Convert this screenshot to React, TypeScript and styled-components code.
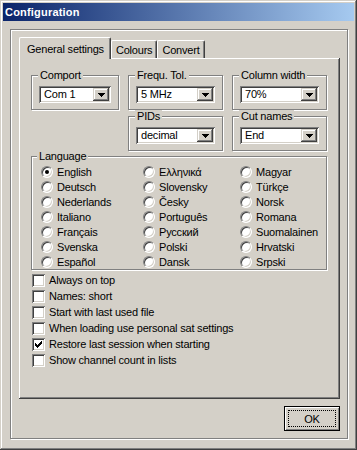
import styled, { createGlobalStyle } from 'styled-components';

const GlobalStyle = createGlobalStyle`
  html, body {
    margin: 0;
    padding: 0;
    background: #d4d0c8;
  }
`;

const Window = styled.div`
  box-sizing: border-box;
  width: 357px;
  height: 450px;
  padding: 3px;
  display: flex;
  flex-direction: column;
  background: #d4d0c8;
  box-shadow: inset -1px -1px #404040, inset 1px 1px #d4d0c8, inset -2px -2px #808080, inset 2px 2px #fff;
  font-family: 'Liberation Sans', Arial, sans-serif;
  font-size: 11px;
  letter-spacing: -0.2px;
  color: #000;
`;

const TitleBar = styled.div`
  height: 18px;
  display: flex;
  align-items: center;
  padding-left: 2px;
  background: linear-gradient(to right, #0a246a, #a6caf0);
  color: #fff;
  font-weight: bold;
  letter-spacing: 0.2px;
`;

const Frame = styled.div`
  box-sizing: border-box;
  width: 338px;
  margin: 8px 0 0 7px;
  padding: 7px 7px 7px 8px;
  display: flex;
  flex-direction: column;
  border: 1px solid #808080;
  box-shadow: inset 1px 1px #fff, 1px 1px #fff;
`;

const TabStrip = styled.div`
  height: 21px;
  display: flex;
  align-items: flex-end;
`;

const Tab = styled.div<{ $active?: boolean }>`
  box-sizing: border-box;
  height: ${(p) => (p.$active ? 22 : 18)}px;
  margin-bottom: ${(p) => (p.$active ? -1 : 0)}px;
  padding: ${(p) => (p.$active ? '0 6px 0 7px' : '0 4px')};
  display: flex;
  align-items: center;
  background: #d4d0c8;
  border-top: 1px solid #fff;
  border-left: 1px solid #fff;
  border-right: 1px solid #404040;
  border-radius: 2px 2px 0 0;
  box-shadow: inset -1px 0 #808080;
  position: relative;
  z-index: ${(p) => (p.$active ? 1 : 0)};
`;

const Pane = styled.div`
  box-sizing: border-box;
  height: 341px;
  padding: 11px 0 0 12px;
  box-shadow: inset -1px -1px #404040, inset 1px 1px #fff, inset -2px -2px #808080, inset 2px 2px #d4d0c8;
`;

const TopGrid = styled.div`
  display: grid;
  grid-template-columns: 88px 95px 95px;
  column-gap: 9px;
`;

const Group = styled.fieldset<{ $col?: number }>`
  box-sizing: border-box;
  margin: 0;
  min-width: 0;
  padding: 5px 7px 6px;
  border: 1px solid #808080;
  box-shadow: inset 1px 1px #fff, 1px 1px #fff;
  grid-column: ${(p) => p.$col ?? 'auto'};
`;

const Legend = styled.legend<{ $shift?: number }>`
  padding: 0 2px;
  margin-left: ${(p) => p.$shift ?? -1}px;
  line-height: 12px;
  background: #d4d0c8;
`;

const Combo = styled.div`
  box-sizing: border-box;
  height: 17px;
  padding: 2px;
  display: flex;
  align-items: center;
  background: #fff;
  box-shadow: inset 1px 1px #808080, inset -1px -1px #fff, inset 2px 2px #404040, inset -2px -2px #d4d0c8;
`;

const ComboText = styled.span`
  flex: 1;
  padding-left: 3px;
  line-height: 13px;
`;

const DropButton = styled.span`
  width: 16px;
  height: 13px;
  display: flex;
  align-items: center;
  justify-content: center;
  background: #d4d0c8;
  box-shadow: inset -1px -1px #404040, inset 1px 1px #d4d0c8, inset -2px -2px #808080, inset 2px 2px #fff;
`;

const LangGroup = styled(Group)`
  width: 296px;
  margin-top: -1px;
  padding: 2px 0 0 9px;
`;

const RadioGrid = styled.div`
  display: grid;
  grid-template-columns: 102px 97px 1fr;
  grid-template-rows: repeat(7, 15px);
  grid-auto-flow: column;
`;

const Option = styled.label`
  display: flex;
  align-items: center;
  gap: 4px;
  white-space: nowrap;
`;

const RadioDot = styled.span<{ $on?: boolean }>`
  box-sizing: border-box;
  width: 12px;
  height: 12px;
  flex: none;
  display: flex;
  align-items: center;
  justify-content: center;
  border-radius: 50%;
  border: 1px solid;
  border-color: #808080 #fff #fff #808080;
  background: #fff;
  box-shadow: inset 1px 1px #404040, inset -1px -1px #d4d0c8;

  &::after {
    content: '';
    width: 4px;
    height: 4px;
    border-radius: 50%;
    background: ${(p) => (p.$on ? '#000' : 'transparent')};
  }
`;

const CheckList = styled.div`
  margin: 2px 0 0 1px;
  display: flex;
  flex-direction: column;
`;

const CheckRow = styled(Option)`
  height: 16px;
`;

const CheckBox = styled.span`
  box-sizing: border-box;
  width: 13px;
  height: 13px;
  flex: none;
  display: flex;
  align-items: center;
  justify-content: center;
  background: #fff;
  box-shadow: inset 1px 1px #808080, inset -1px -1px #fff, inset 2px 2px #404040, inset -2px -2px #d4d0c8;
`;

const Footer = styled.div`
  margin-top: 7px;
  display: flex;
  justify-content: flex-end;
`;

const OkButton = styled.button`
  box-sizing: border-box;
  width: 56px;
  height: 25px;
  padding: 3px;
  display: flex;
  border: 1px solid #000;
  background: #d4d0c8;
  box-shadow: inset 1px 1px #fff, inset -1px -1px #808080;
  font: inherit;
  letter-spacing: inherit;
  color: #000;
`;

const FocusRing = styled.span`
  flex: 1;
  display: flex;
  align-items: center;
  justify-content: center;
  border: 1px dotted #000;
`;

const Arrow = () => (
  <svg width="7" height="4" viewBox="0 0 7 4" shapeRendering="crispEdges">
    <polygon points="0,0 7,0 3.5,4" fill="#000" />
  </svg>
);

const Tick = () => (
  <svg width="7" height="7" viewBox="0 0 7 7" shapeRendering="crispEdges">
    <polygon points="0,2 2,4 7,-1 7,2 2,7 0,5" fill="#000" />
  </svg>
);

const Select = ({ value }: { value: string }) => (
  <Combo>
    <ComboText>{value}</ComboText>
    <DropButton>
      <Arrow />
    </DropButton>
  </Combo>
);

const languages = [
  'English', 'Deutsch', 'Nederlands', 'Italiano', 'Français', 'Svenska', 'Español',
  'Ελληνικά', 'Slovensky', 'Česky', 'Português', 'Русский', 'Polski', 'Dansk',
  'Magyar', 'Türkçe', 'Norsk', 'Romana', 'Suomalainen', 'Hrvatski', 'Srpski',
];

const options = [
  { label: 'Always on top', checked: false },
  { label: 'Names: short', checked: false },
  { label: 'Start with last used file', checked: false },
  { label: 'When loading use personal sat settings', checked: false },
  { label: 'Restore last session when starting', checked: true },
  { label: 'Show channel count in lists', checked: false },
];

export default function App() {
  return (
    <>
      <GlobalStyle />
      <Window>
        <TitleBar>Configuration</TitleBar>
        <Frame>
          <TabStrip>
            <Tab $active>General settings</Tab>
            <Tab>Colours</Tab>
            <Tab>Convert</Tab>
          </TabStrip>
          <Pane>
            <TopGrid>
              <Group>
                <Legend>Comport</Legend>
                <Select value="Com 1" />
              </Group>
              <Group>
                <Legend>Frequ. Tol.</Legend>
                <Select value="5 MHz" />
              </Group>
              <Group>
                <Legend>Column width</Legend>
                <Select value="70%" />
              </Group>
              <Group $col={2}>
                <Legend>PIDs</Legend>
                <Select value="decimal" />
              </Group>
              <Group $col={3}>
                <Legend>Cut names</Legend>
                <Select value="End" />
              </Group>
            </TopGrid>

            <LangGroup>
              <Legend $shift={-4}>Language</Legend>
              <RadioGrid>
                {languages.map((lang) => (
                  <Option key={lang}>
                    <RadioDot $on={lang === 'English'} />
                    {lang}
                  </Option>
                ))}
              </RadioGrid>
            </LangGroup>

            <CheckList>
              {options.map((o) => (
                <CheckRow key={o.label}>
                  <CheckBox>{o.checked && <Tick />}</CheckBox>
                  {o.label}
                </CheckRow>
              ))}
            </CheckList>
          </Pane>
          <Footer>
            <OkButton>
              <FocusRing>OK</FocusRing>
            </OkButton>
          </Footer>
        </Frame>
      </Window>
    </>
  );
}
